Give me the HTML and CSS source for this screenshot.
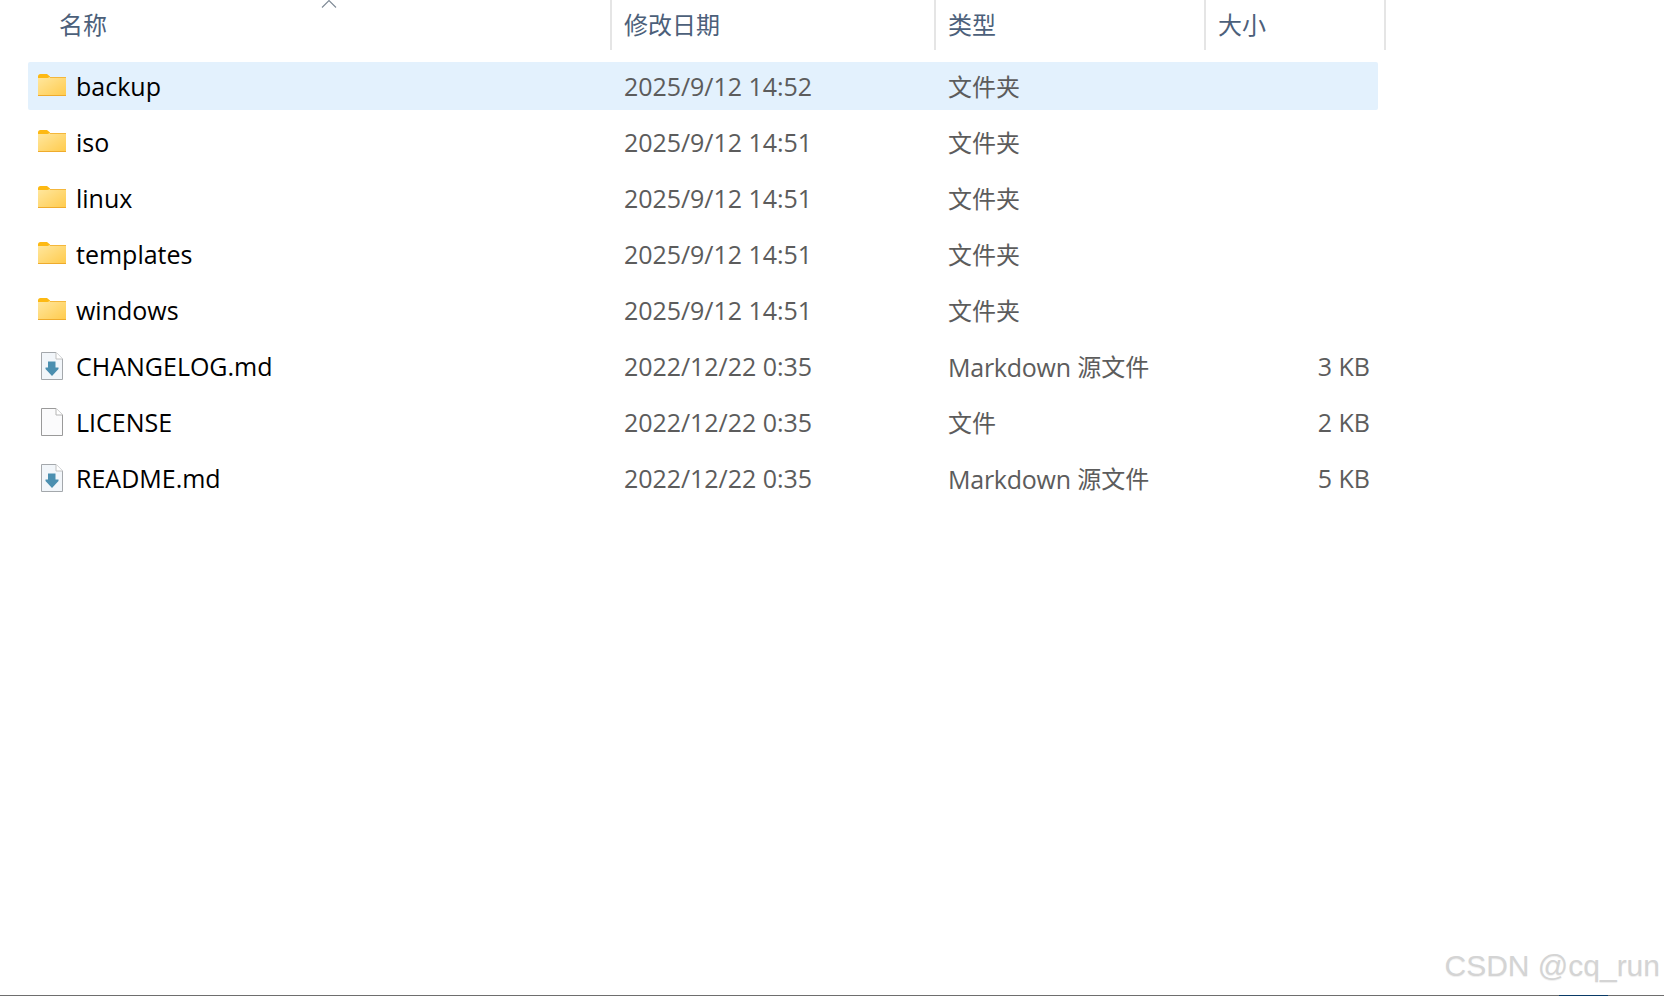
FILE: index.html
```html
<!DOCTYPE html>
<html lang="zh-CN">
<head>
<meta charset="utf-8">
<title>文件列表</title>
<link rel="stylesheet" href="styles.css">
</head>
<body>
<svg class="defs" width="0" height="0" aria-hidden="true">
  <defs>
    <linearGradient id="fold" x1="0" y1="0" x2="1" y2="1">
      <stop offset="0" stop-color="#ffe79f"/>
      <stop offset="1" stop-color="#ffcb4d"/>
    </linearGradient>
    <symbol id="folder" viewBox="0 0 28 22">
      <path d="M0 2.5Q0 0 2.5 0H9L12 2.5V6H0Z" fill="#fdb913"/>
      <path d="M0 4H9.5L12 3H28V21.5H0Z" fill="url(#fold)"/>
      <path d="M0 21H28V22H0Z" fill="#efab2c"/>
      <path d="M12 3H28V4H12Z" fill="#f4b73c"/>
    </symbol>
    <symbol id="page" viewBox="0 0 22 28">
      <path d="M.5.5H15L21.5 7V27.5H.5Z" fill="#fbfbfc" stroke="#9a9a9a"/>
      <path d="M15 .5V7H21.5" fill="#fff" stroke="#b5b5b5"/>
    </symbol>
    <symbol id="md" viewBox="0 0 22 28">
      <path d="M.5.5H15L21.5 7V27.5H.5Z" fill="#f2f6fa" stroke="#a4a8ac"/>
      <path d="M15 .5V7H21.5" fill="#fff" stroke="#c0c0c0"/>
      <path d="M7 9.5H14.5V15.5H17.5V17L11 24 4.500 17V15.5H7Z" fill="#4b8fb0"/>
    </symbol>
  </defs>
</svg>

<main class="explorer">
  <header class="head">
    <div class="hcell name">名称</div>
    <div class="hcell date">修改日期</div>
    <div class="hcell type">类型</div>
    <div class="hcell size">大小</div>
    <svg class="sort" width="16" height="8" viewBox="0 0 16 8"><path d="M1 7.500 8 .5 15 7.500" fill="none" stroke="#7f8a96" stroke-width="1.1"/></svg>
  </header>

  <section class="rows">
    <div class="row selected">
      <span class="name"><svg class="ico"><use href="#folder"/></svg>backup</span>
      <span class="date">2025/9/12 14:52</span><span class="type"><span class="cjk">文件夹</span></span><span class="size"></span>
    </div>
    <div class="row">
      <span class="name"><svg class="ico"><use href="#folder"/></svg>iso</span>
      <span class="date">2025/9/12 14:51</span><span class="type"><span class="cjk">文件夹</span></span><span class="size"></span>
    </div>
    <div class="row">
      <span class="name"><svg class="ico"><use href="#folder"/></svg>linux</span>
      <span class="date">2025/9/12 14:51</span><span class="type"><span class="cjk">文件夹</span></span><span class="size"></span>
    </div>
    <div class="row">
      <span class="name"><svg class="ico"><use href="#folder"/></svg>templates</span>
      <span class="date">2025/9/12 14:51</span><span class="type"><span class="cjk">文件夹</span></span><span class="size"></span>
    </div>
    <div class="row">
      <span class="name"><svg class="ico"><use href="#folder"/></svg>windows</span>
      <span class="date">2025/9/12 14:51</span><span class="type"><span class="cjk">文件夹</span></span><span class="size"></span>
    </div>
    <div class="row">
      <span class="name"><svg class="ico doc"><use href="#md"/></svg>CHANGELOG.md</span>
      <span class="date">2022/12/22 0:35</span><span class="type"><span class="latin">Markdown</span> <span class="cjk">源文件</span></span><span class="size">3 KB</span>
    </div>
    <div class="row">
      <span class="name"><svg class="ico doc"><use href="#page"/></svg>LICENSE</span>
      <span class="date">2022/12/22 0:35</span><span class="type"><span class="cjk">文件</span></span><span class="size">2 KB</span>
    </div>
    <div class="row">
      <span class="name"><svg class="ico doc"><use href="#md"/></svg>README.md</span>
      <span class="date">2022/12/22 0:35</span><span class="type"><span class="latin">Markdown</span> <span class="cjk">源文件</span></span><span class="size">5 KB</span>
    </div>
  </section>
</main>

<div class="watermark">CSDN @cq_run</div>
<div class="taskline"><span class="taskmark"></span></div>
</body>
</html>
```

FILE: styles.css
```css
* { box-sizing: border-box; }
html, body { margin: 0; height: 100%; background: #fff; overflow: hidden; }
body {
  position: relative;
  font-family: "Open Sans", "Noto Sans CJK SC", sans-serif;
  font-size: 24px;
}
.defs { position: absolute; }
.explorer { padding: 0; }

.head {
  position: relative;
  display: grid;
  grid-template-columns: 612px 324px 270px 180px;
  height: 50px;
  color: #4c607a;
}
.hcell {
  display: flex;
  align-items: center;
  height: 50px;
  border-right: 2px solid #e5e5e5;
  font-family: "Noto Sans CJK SC", sans-serif;
  padding-bottom: 3px;
}
.hcell.name { padding-left: 59px; }
.hcell.date { padding-left: 12px; }
.hcell.type { padding-left: 12px; }
.hcell.size { padding-left: 12px; }
.sort { position: absolute; left: 321px; top: 0; }

.rows { margin: 12px 0 0 28px; width: 1350px; display: flex; flex-direction: column; gap: 8px; }
.row {
  display: grid;
  grid-template-columns: 584px 324px 270px 172px;
  align-items: center;
  height: 48px;
  border-radius: 2px;
  color: #5c5c5c;
  font-size: 25px;
}
.row.selected { background: #e3f1fd; }
.row .name { display: flex; align-items: center; color: #000; padding-left: 10px; }
.row .date { padding-left: 12px; letter-spacing: -0.05px; }
.row .type { padding-left: 12px; }
.row .size { text-align: right; padding-right: 8px; }
.latin { letter-spacing: -0.25px; }
.cjk { font-size: 24px; position: relative; top: -1px; }
.ico { width: 28px; height: 22px; margin-right: 10px; flex: none; position: relative; top: -1px; }
.ico.doc { width: 22px; height: 28px; margin: 0 13px 0 3px; top: 0; }

.watermark {
  position: absolute;
  right: 4px;
  top: 949px;
  font-family: "Liberation Sans", sans-serif;
  font-size: 30px;
  color: #d4d4d4;
  text-shadow: 0 1px 1px #eee;
  white-space: nowrap;
}
.taskline { position: absolute; left: 0; right: 0; top: 995px; height: 1px; background: #6e6e6e; }
.taskmark { position: absolute; left: 1559px; width: 49px; top: 0; height: 1px; background: #0a3a66; }
```
